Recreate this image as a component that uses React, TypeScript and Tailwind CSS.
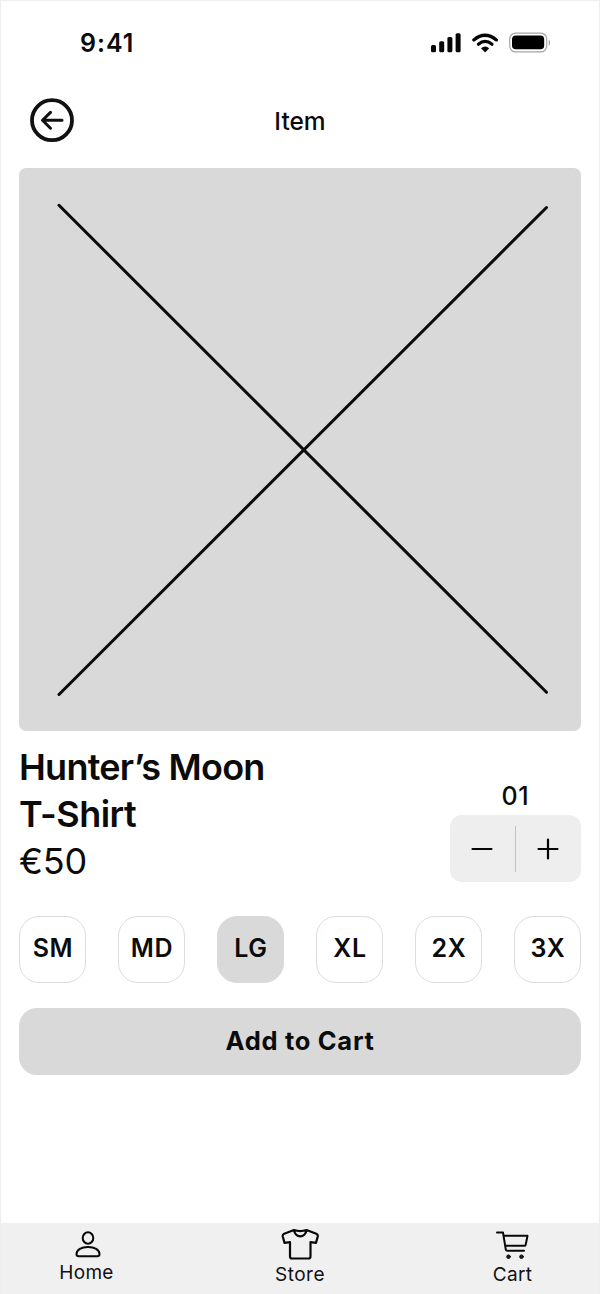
import React from "react";

const SIZES = ["SM", "MD", "LG", "XL", "2X", "3X"];

function StatusBar() {
  return (
    <div className="flex h-[83px] items-center justify-between pr-[49px] pl-[79px]">
      <span className="text-[25px] leading-[30px] font-semibold tracking-[1px]">9:41</span>
      <svg width="120" height="24" viewBox="430 31 120 24" fill="#050505">
        <rect x="431" y="45" width="5" height="7.2" rx="1.5" />
        <rect x="439.2" y="41.2" width="5" height="11" rx="1.5" />
        <rect x="447.4" y="37" width="5" height="15.2" rx="1.5" />
        <rect x="455.6" y="33.2" width="5" height="19" rx="1.5" />
        <g fill="none" stroke="#050505" strokeWidth="3.2">
          <path d="M473.8 39.9Q485 30.600 496.4 39.9" strokeLinecap="round" />
          <path d="M478.4 44.3Q485 38.6 492 44.3" strokeLinecap="round" />
        </g>
        <path d="M481 48.2Q485.1 45 489.2 48.2L485.8 51.8Q485.1 52.5 484.4 51.8Z" />
        <rect x="509.7" y="33.1" width="37" height="18.8" rx="5.8" fill="none" stroke="#a5a5a5" strokeWidth="1.2" />
        <rect x="512" y="35.6" width="32.2" height="13.6" rx="3.8" fill="#000" />
        <path d="M548.8 40v5.6c1-.5 1.8-1.6 1.8-2.8s-.8-2.3-1.8-2.8z" fill="#a0a0a0" />
      </svg>
    </div>
  );
}

function Header() {
  return (
    <header className="grid h-[72px] grid-cols-[1fr_auto_1fr] items-center px-[28px]">
      <button aria-label="Back" className="h-[46px] w-[46px]">
        <svg width="46" height="46" viewBox="0 0 46 46" fill="none" stroke="#111" strokeLinecap="round" strokeLinejoin="round">
          <circle cx="23" cy="23.200" r="20" strokeWidth="3.8" />
          <path d="M33 23.200H13.500M21.500 15.400L13.500 23.200L21.500 31.200" strokeWidth="3" />
        </svg>
      </button>
      <h1 className="pt-px text-[24.500px] leading-[30px] font-[550]">Item</h1>
    </header>
  );
}

function ProductImage() {
  return (
    <div className="mt-[12px] h-[563px] rounded-[7px] bg-[#d9d9d9]">
      <svg width="562" height="563" viewBox="19 168 562 563" stroke="#0b0b0b" strokeWidth="3" strokeLinecap="round">
        <path d="M59 205.300L546.500 692.300M546.500 207.500L59 694.500" />
      </svg>
    </div>
  );
}

function Stepper() {
  return (
    <div className="mb-[2.500px] flex w-[131px] flex-col items-center">
      <span className="text-[25px] leading-[30px] font-[550] tracking-[0.700px]">01</span>
      <div className="mt-[4px] flex h-[67px] w-full items-center rounded-[12px] bg-[#eee]">
        <button aria-label="Decrease" className="flex flex-1 justify-center">
          <svg width="24" height="24" stroke="#050505" strokeWidth="2.200" strokeLinecap="round"><path d="M2.500 12h19" /></svg>
        </button>
        <div className="h-[46px] w-[1.500px] bg-[#c2c2c2]" />
        <button aria-label="Increase" className="flex flex-1 justify-center">
          <svg width="24" height="24" stroke="#050505" strokeWidth="2.200" strokeLinecap="round"><path d="M1.500 12h19M11 2.500v19" /></svg>
        </button>
      </div>
    </div>
  );
}

function TabBar() {
  return (
    <nav className="mt-auto flex h-[71px] items-start justify-between bg-[#f0f0f0] pr-[47px] pl-[45px] text-[#111]">
      <a className="flex w-[80px] flex-col items-center pt-[7px]">
        <svg className="ml-[4px]" width="28" height="28" viewBox="0 0 28 28" fill="none" stroke="#080808" strokeWidth="2" strokeLinejoin="round">
          <ellipse cx="14" cy="8" rx="5.300" ry="5.700" />
          <path d="M2.500 24.200C2.500 19.700 7.500 17 14 17S25.500 19.700 25.500 24.200Q25.500 26.200 23.300 26.200H4.700Q2.500 26.200 2.500 24.200Z" />
        </svg>
        <span className="mt-[3px] ml-px text-[19px] leading-[24px] tracking-[0.300px]">Home</span>
      </a>
      <a className="flex w-[80px] flex-col items-center pt-[5px]">
        <svg className="ml-[2px]" width="38" height="32" viewBox="0 0 38 32" fill="none" stroke="#080808" strokeWidth="2.200" strokeLinejoin="round">
          <path d="M13 2L3.200 5.700Q1.400 6.500 1.700 8.300L3.500 14.900L9 14.100V28.500Q9 30.500 11 30.500H27.500Q29.500 30.500 29.500 28.500V14.100L35 14.900L36.800 8.300Q37.100 6.500 35.300 5.700L25.500 2Q19.200 4.200 13 2ZM13 2C14 10.500 24.500 10.500 25.500 2" />
        </svg>
        <span className="mt-[3px] ml-[2px] text-[19px] leading-[24px] tracking-[0.500px]">Store</span>
      </a>
      <a className="flex w-[80px] flex-col items-center pt-[7px]">
        <svg width="34" height="30" viewBox="0 0 34 30" fill="none" stroke="#080808" strokeWidth="2" strokeLinecap="round" strokeLinejoin="round">
          <path d="M2 2.500H8L10.800 19.700Q11 20.800 12.500 20.800H29M8.500 5.700H32.500L30.700 14.700Q30.500 15.800 29 15.800H10.200" />
          <circle cx="13.500" cy="26.700" r="1.800" fill="#222" strokeWidth="1" />
          <circle cx="26.500" cy="26.700" r="1.800" fill="#222" strokeWidth="1" />
        </svg>
        <span className="mt-[3px] ml-px text-[19px] leading-[24px] tracking-[0.300px]">Cart</span>
      </a>
    </nav>
  );
}

export default function App() {
  return (
    <div className="flex h-[1294px] w-[600px] flex-col border-x border-t border-[#eee] bg-white font-['Inter',sans-serif] text-[#0b0b0b]">
      <StatusBar />
      <Header />
      <main className="flex flex-col px-[18px]">
        <ProductImage />
        <div className="mt-[12.500px] flex items-end justify-between">
          <div className="text-[36px] leading-[47px]">
            <h2 className="font-[560] tracking-[-0.750px]">
              Hunter’s Moon
              <br />
              <span className="tracking-[-0.550px]">T-Shirt</span>
            </h2>
            <p className="tracking-[-0.200px]">€50</p>
          </div>
          <Stepper />
        </div>
        <div className="mt-[31px] flex justify-between">
          {SIZES.map((size) => (
            <button
              key={size}
              className={`h-[67px] w-[67px] rounded-[20px] border pb-[3px] pl-px text-[25px] leading-[30px] font-[570] tracking-[0.700px] ${
                size === "LG" ? "border-[#d9d9d9] bg-[#d9d9d9]" : "border-[#dcdcdc] bg-white"
              }`}
            >
              {size}
            </button>
          ))}
        </div>
        <button className="mt-[25px] h-[67px] rounded-[18px] bg-[#d9d9d9] text-[25.500px] leading-[30px] font-[650] tracking-[0.700px]">Add to Cart</button>
      </main>
      <TabBar />
    </div>
  );
}
